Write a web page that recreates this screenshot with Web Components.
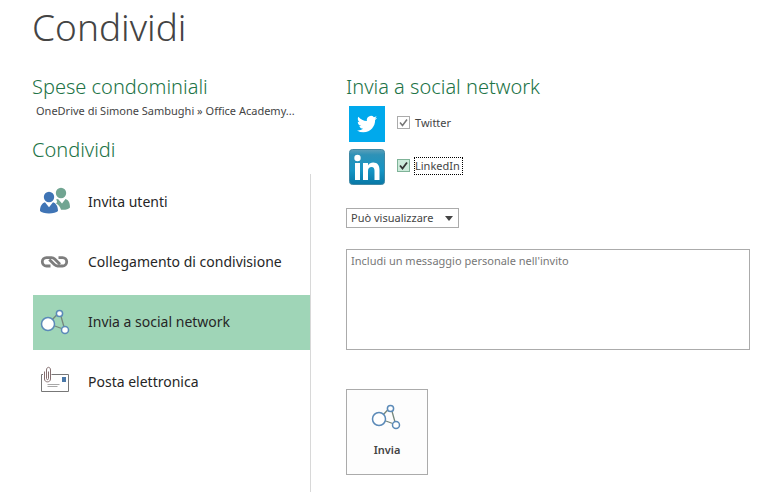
<!DOCTYPE html>
<html lang="it">
<head>
<meta charset="utf-8">
<title>Condividi</title>
<style>
  body {
    background: #ffffff;
    color: #444444;
    font-family: 'Noto Sans', 'Open Sans', sans-serif;
    margin: 0;
  }
</style>
</head>
<body>
<share-page heading="Condividi">
  <share-title slot="side">Spese condominiali</share-title>
  <share-path slot="side">OneDrive di Simone Sambughi » Office Academy...</share-path>
  <share-title slot="side">Condividi</share-title>
  <share-nav slot="side">
    <share-nav-item icon="people">Invita utenti</share-nav-item>
    <share-nav-item icon="link">Collegamento di condivisione</share-nav-item>
    <share-nav-item icon="social" selected>Invia a social network</share-nav-item>
    <share-nav-item icon="mail">Posta elettronica</share-nav-item>
  </share-nav>
  <share-title>Invia a social network</share-title>
  <share-form></share-form>
</share-page>

<script>
const ICONS = {
  people: /* svg */ `
    <svg width="32" height="32" viewBox="0 1 32 32">
      <g fill="#71a592">
        <circle cx="21" cy="8" r="5.2" />
        <path d="M16 14.5 18 14l4 4.500 3.500-4.500c3 .8 4.500 3.500 4.500 8.500-1.500 2-5 2.500-9 2.200-.8-3-2.500-5-5-6.200 1.500-1.500 1.200-2.800 0-4z" />
      </g>
      <circle cx="9" cy="12" r="5.200" fill="#3f74b5" stroke="#ffffff" stroke-width="1" paint-order="stroke" />
      <path d="M0 26c0-5 2-7.800 5-8.800l4 5 4-5c3 1 5 3.800 5 8.800-2.500 3.200-15.500 3.200-18 0z" fill="#3f74b5" />
    </svg>`,
  link: /* svg */ `
    <svg width="32" height="32" viewBox="0 0 32 32" fill="none" stroke="#7d7d7d" stroke-width="2.800">
      <path d="M10.500 20H6.500a4.200 4.200 0 0 1 0-8.400H11.500q1.800 0 3.200 1.400l5.300 5.300" />
      <path d="M18.500 11.600h4a4.200 4.200 0 0 1 0 8.400H17.500q-1.800 0-3.200-1.400l-5-5" />
    </svg>`,
  social: /* svg */ `
    <svg width="32" height="32" viewBox="0 0 32 32" fill="#ffffff" stroke="#5b8ab8" stroke-width="1.500">
      <path d="M12 14 18 7.500M20.500 8.500 24 21M13.500 19.500 23 23" fill="none" stroke="#75877c" stroke-width="1.300" />
      <circle cx="8" cy="18" r="6.500" />
      <circle cx="19.500" cy="7.500" r="3.100" />
      <circle cx="25" cy="24" r="3.500" />
    </svg>`,
  mail: /* svg */ `
    <svg width="32" height="32" viewBox="0 0 32 32" fill="none">
      <path d="M3 8.500H1.500v17h27v-17H11.500" stroke="#777777" />
      <path d="M7.500 18.500h12M7.500 20.500h10" stroke="#a8a8a8" />
      <path d="M22 11h4v5h-4z" fill="#4a78a8" />
      <path d="M8.500 5.500v7c0 1.500-2 1.500-2 0V4c0-3.600 4-3.600 4 0v9c0 3.800-6 3.800-6 0V5.500" stroke="#856f70" />
    </svg>`,
  twitter: /* svg */ `
    <svg width="36" height="36" viewBox="0 0 36 36">
      <path d="M0 0h36v36H0z" fill="#00a9ec" />
      <path transform="translate(8 8) scale(.84)" fill="#ffffff" d="M23.950 4.570a10 10 0 0 1-2.820.770 4.960 4.960 0 0 0 2.160-2.720c-.950.550-2 .950-3.130 1.180a4.920 4.920 0 0 0-8.380 4.480C7.690 8.100 4.070 6.130 1.640 3.160a4.820 4.820 0 0 0-.670 2.480c0 1.710.870 3.210 2.190 4.100a4.900 4.900 0 0 1-2.230-.620v.060a4.920 4.920 0 0 0 3.950 4.830 5 5 0 0 1-2.210.080 4.940 4.940 0 0 0 4.600 3.420A9.870 9.870 0 0 1 0 19.540a13.990 13.990 0 0 0 7.550 2.210c9.050 0 14-7.500 14-13.980 0-.210 0-.420-.020-.630a9.940 9.940 0 0 0 2.460-2.550z" />
    </svg>`,
  linkedin: /* svg */ `
    <svg width="36" height="36" viewBox="0 0 36 36">
      <defs>
        <linearGradient id="sheen" x1="0" y1="0" x2="0" y2="1">
          <stop offset="0" stop-color="#5c9fb9" />
          <stop offset=".15" stop-color="#2e92b7" />
          <stop offset=".6" stop-color="#1594c4" />
          <stop offset="1" stop-color="#0877a5" />
        </linearGradient>
      </defs>
      <rect x=".5" y=".5" width="35" height="35" rx="3" fill="url(#sheen)" stroke="#3f88a5" />
      <g fill="#ffffff">
        <circle cx="8.500" cy="9" r="3.200" />
        <path d="M6 14h5v17H6zM14 14h5v2.400c1.200-1.900 3-2.800 5.200-2.800 4.200 0 6.300 2.700 6.300 7.400v10h-5v-9.200c0-2.500-.9-3.800-2.800-3.800-2.300 0-3.700 1.500-3.700 4V31h-5z" />
      </g>
    </svg>`
};

class ShareIcon extends HTMLElement {
  constructor() {
    super();

    this.attachShadow( {mode: 'open'} );
    this.shadowRoot.innerHTML = /* template */ `
      <style>
        :host {
          display: inline-flex;
          flex-shrink: 0;
        }

        svg {
          display: block;
        }
      </style>
      <span></span>
    `;
    this.$glyph = this.shadowRoot.querySelector( 'span' );
  }

  static get observedAttributes() {
    return [ 'name' ];
  }

  attributeChangedCallback( name, old, value ) {
    this.$glyph.innerHTML = ICONS[value] || '';
  }
}

window.customElements.define( 'share-icon', ShareIcon );

class ShareTitle extends HTMLElement {
  constructor() {
    super();

    this.attachShadow( {mode: 'open'} );
    this.shadowRoot.innerHTML = /* template */ `
      <style>
        :host {
          display: block;
        }

        h2 {
          color: #217346;
          font-size: 20px;
          font-weight: 300;
          line-height: 28px;
          margin: 0;
        }
      </style>
      <h2><slot></slot></h2>
    `;
  }
}

window.customElements.define( 'share-title', ShareTitle );

class SharePath extends HTMLElement {
  constructor() {
    super();

    this.attachShadow( {mode: 'open'} );
    this.shadowRoot.innerHTML = /* template */ `
      <style>
        :host {
          display: block;
          font-size: 11px;
          line-height: 20px;
          padding: 0 4px 15px 4px;
          white-space: nowrap;
        }
      </style>
      <slot></slot>
    `;
  }
}

window.customElements.define( 'share-path', SharePath );

class ShareNavItem extends HTMLElement {
  constructor() {
    super();

    this.attachShadow( {mode: 'open'} );
    this.shadowRoot.innerHTML = /* template */ `
      <style>
        :host {
          display: block;
        }

        button {
          align-items: center;
          background: none;
          border: none;
          color: #262626;
          cursor: pointer;
          display: flex;
          font-family: inherit;
          font-size: 14px;
          gap: 16px;
          height: 55px;
          line-height: 20px;
          padding: 0 0 2px 7px;
          text-align: left;
          white-space: nowrap;
          width: 100%;
        }

        button:hover {
          background-color: #d3f0e0;
        }

        :host( [selected] ) button {
          background-color: #9fd5b7;
        }
      </style>
      <button type="button">
        <share-icon></share-icon>
        <slot></slot>
      </button>
    `;
    this.$icon = this.shadowRoot.querySelector( 'share-icon' );
  }

  connectedCallback() {
    this.$icon.setAttribute( 'name', this.getAttribute( 'icon' ) );
  }
}

window.customElements.define( 'share-nav-item', ShareNavItem );

class ShareNav extends HTMLElement {
  constructor() {
    super();

    this.attachShadow( {mode: 'open'} );
    this.shadowRoot.innerHTML = /* template */ `
      <style>
        :host {
          border-right: solid 1px #d8d8d8;
          display: block;
          flex-grow: 1;
          margin-top: 10px;
        }

        nav {
          display: flex;
          flex-direction: column;
          gap: 5px;
          padding: 1px 0 0 1px;
        }
      </style>
      <nav><slot></slot></nav>
    `;
  }
}

window.customElements.define( 'share-nav', ShareNav );

class ShareNetwork extends HTMLElement {
  constructor() {
    super();

    this.attachShadow( {mode: 'open'} );
    this.shadowRoot.innerHTML = /* template */ `
      <style>
        :host {
          align-items: center;
          display: flex;
          gap: 12px;
        }

        div {
          align-items: center;
          display: flex;
          gap: 4px;
          padding-bottom: 3px;
        }

        input {
          appearance: none;
          background: #ffffff url( "data:image/svg+xml,%3Csvg xmlns='http://www.w3.org/2000/svg' viewBox='0 0 11 11'%3E%3Cpath d='M2 5.500l2.500 3L9 2.500' fill='none' stroke='%23777777' stroke-width='1.500'/%3E%3C/svg%3E" );
          border: solid 1px #ababab;
          box-sizing: border-box;
          height: 13px;
          margin: 0;
          width: 13px;
        }

        :host( [active] ) input {
          background: #cdebdb url( "data:image/svg+xml,%3Csvg xmlns='http://www.w3.org/2000/svg' viewBox='0 0 11 11'%3E%3Cpath d='M2 5.500l2.500 3L9 2.500' fill='none' stroke='%23333333' stroke-width='1.800'/%3E%3C/svg%3E" );
          border-color: #7fb398;
        }

        label {
          border: dotted 1px transparent;
          font-size: 11px;
          line-height: 16px;
        }

        :host( [active] ) label {
          border-color: #000000;
          padding-right: 2px;
        }
      </style>
      <share-icon></share-icon>
      <div>
        <input id="network" type="checkbox" checked />
        <label for="network"><slot></slot></label>
      </div>
    `;
    this.$icon = this.shadowRoot.querySelector( 'share-icon' );
  }

  connectedCallback() {
    this.$icon.setAttribute( 'name', this.getAttribute( 'icon' ) );
  }
}

window.customElements.define( 'share-network', ShareNetwork );

class ShareForm extends HTMLElement {
  constructor() {
    super();

    this.attachShadow( {mode: 'open'} );
    this.shadowRoot.innerHTML = /* template */ `
      <style>
        :host {
          display: block;
        }

        form {
          align-items: flex-start;
          display: flex;
          flex-direction: column;
        }

        .networks {
          display: flex;
          flex-direction: column;
          gap: 7px;
          padding: 5px 3px 23px 3px;
        }

        .drop {
          align-items: center;
          display: grid;
          margin-bottom: 21px;
        }

        .drop > * {
          grid-area: 1 / 1;
        }

        .drop svg {
          justify-self: end;
          margin-right: 6px;
          pointer-events: none;
        }

        select {
          appearance: none;
          background: #ffffff;
          border: solid 1px #ababab;
          border-radius: 0;
          box-sizing: border-box;
          color: #444444;
          font-family: inherit;
          font-size: 11px;
          height: 20px;
          line-height: 18px;
          padding: 0 24px 0 4px;
        }

        textarea {
          border: solid 1px #ababab;
          box-sizing: border-box;
          color: #444444;
          display: block;
          font-family: inherit;
          font-size: 11px;
          height: 101px;
          line-height: 16px;
          margin: 0 0 39px 0;
          padding: 3px 4px;
          resize: none;
          width: 100%;
        }

        textarea::placeholder {
          color: #777777;
        }

        button {
          align-items: center;
          background: #fdfdfd;
          border: solid 1px #ababab;
          box-sizing: border-box;
          color: #444444;
          cursor: pointer;
          display: flex;
          flex-direction: column;
          font-family: inherit;
          font-size: 11px;
          font-weight: 600;
          gap: 9px;
          height: 86px;
          justify-content: center;
          line-height: 16px;
          padding: 0 0 5px 0;
          width: 82px;
        }
      </style>
      <form>
        <div class="networks">
          <share-network icon="twitter">Twitter</share-network>
          <share-network icon="linkedin" active>LinkedIn</share-network>
        </div>
        <div class="drop">
          <select aria-label="Autorizzazioni">
            <option>Può visualizzare</option>
          </select>
          <svg width="8" height="5" viewBox="0 0 8 5"><path d="M0 0h8L4 5z" fill="#444444" /></svg>
        </div>
        <textarea aria-label="Messaggio" placeholder="Includi un messaggio personale nell'invito"></textarea>
        <button type="button">
          <share-icon name="social"></share-icon>
          Invia
        </button>
      </form>
    `;
  }
}

window.customElements.define( 'share-form', ShareForm );

class SharePage extends HTMLElement {
  constructor() {
    super();

    this.attachShadow( {mode: 'open'} );
    this.shadowRoot.innerHTML = /* template */ `
      <style>
        :host {
          box-sizing: border-box;
          display: flex;
          flex-direction: column;
          min-height: 100vh;
          padding: 0 24px 0 32px;
        }

        h1 {
          font-size: 37px;
          font-weight: 300;
          line-height: 54px;
          margin: 0 0 19px 0;
        }

        .columns {
          display: grid;
          flex-grow: 1;
          gap: 35px;
          grid-template-columns: 279px minmax( 0, 1fr );
        }

        aside {
          display: flex;
          flex-direction: column;
          min-width: 0;
        }
      </style>
      <h1></h1>
      <div class="columns">
        <aside><slot name="side"></slot></aside>
        <main><slot></slot></main>
      </div>
    `;
    this.$heading = this.shadowRoot.querySelector( 'h1' );
  }

  connectedCallback() {
    this.$heading.innerText = this.getAttribute( 'heading' );
  }
}

window.customElements.define( 'share-page', SharePage );
</script>
</body>
</html>
